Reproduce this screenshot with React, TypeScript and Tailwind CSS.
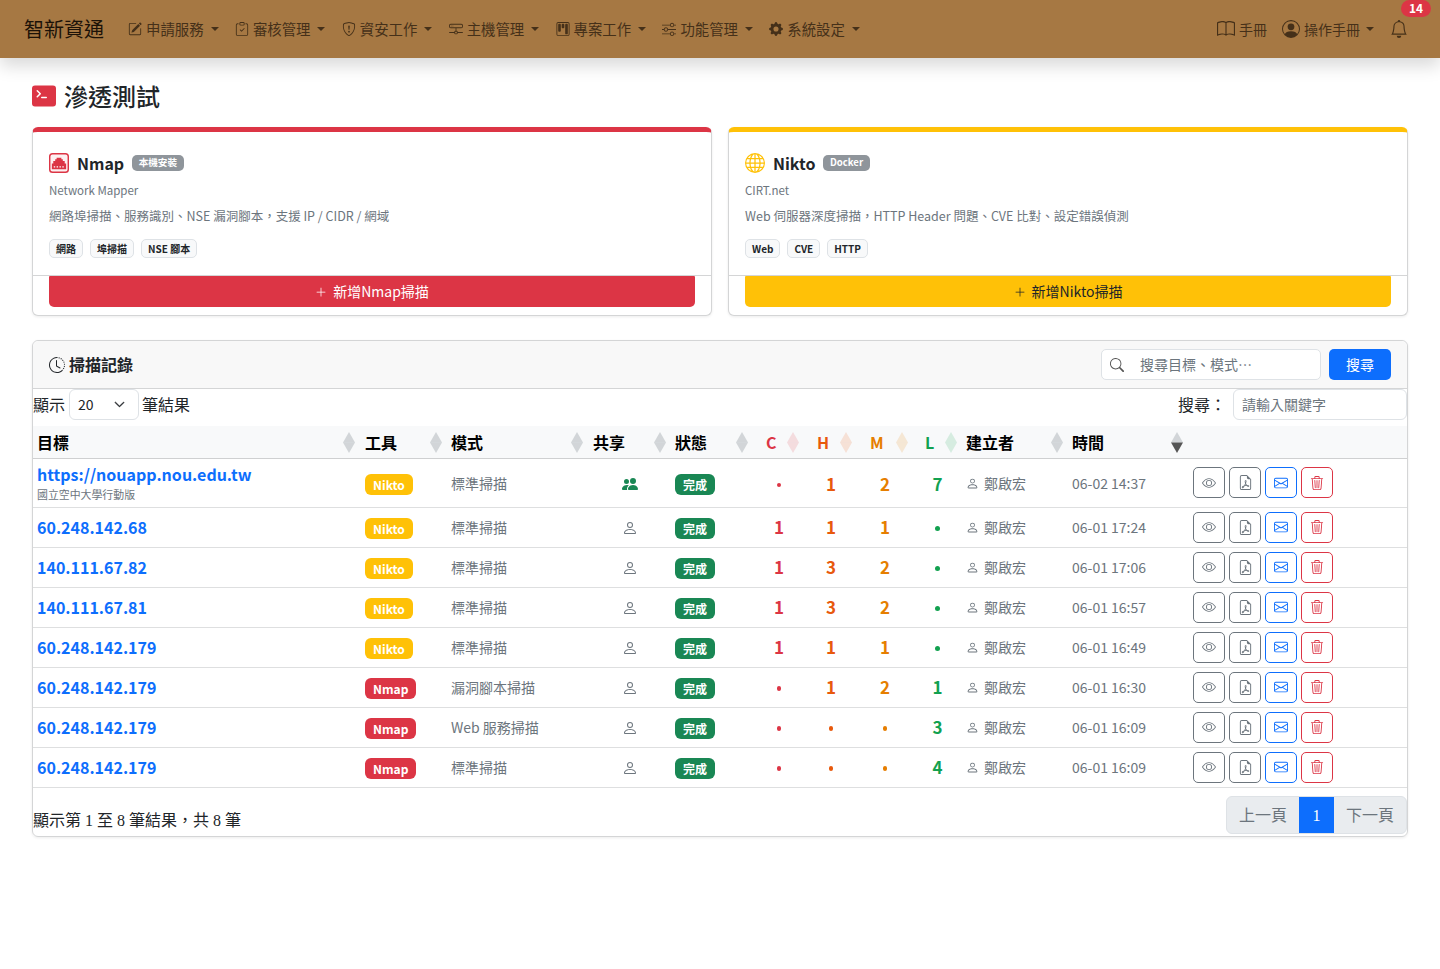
import {
  BsPencilSquare,
  BsClipboardCheck,
  BsShieldExclamation,
  BsHddNetwork,
  BsKanban,
  BsSliders,
  BsGearFill,
  BsBook,
  BsPersonCircle,
  BsBell,
  BsTerminalFill,
  BsClockHistory,
  BsSearch,
  BsPeopleFill,
  BsPerson,
  BsEye,
  BsFileEarmarkPdf,
  BsEnvelope,
  BsTrash3,
  BsPlusLg,
  BsGlobe,
  BsChevronDown,
} from "react-icons/bs";

const sans = "font-['Noto_Sans_CJK_TC','Noto_Sans',sans-serif]";

const navItems = [
  { label: "申請服務", icon: BsPencilSquare },
  { label: "審核管理", icon: BsClipboardCheck },
  { label: "資安工作", icon: BsShieldExclamation },
  { label: "主機管理", icon: BsHddNetwork },
  { label: "專案工作", icon: BsKanban },
  { label: "功能管理", icon: BsSliders },
  { label: "系統設定", icon: BsGearFill },
];

const rows = [
  { target: "https://nouapp.nou.edu.tw", sub: "國立空中大學行動版", tool: "Nikto", mode: "標準掃描", shared: true, c: "", h: "1", m: "2", l: "7", time: "06-02 14:37" },
  { target: "60.248.142.68", tool: "Nikto", mode: "標準掃描", c: "1", h: "1", m: "1", l: "", time: "06-01 17:24" },
  { target: "140.111.67.82", tool: "Nikto", mode: "標準掃描", c: "1", h: "3", m: "2", l: "", time: "06-01 17:06" },
  { target: "140.111.67.81", tool: "Nikto", mode: "標準掃描", c: "1", h: "3", m: "2", l: "", time: "06-01 16:57" },
  { target: "60.248.142.179", tool: "Nikto", mode: "標準掃描", c: "1", h: "1", m: "1", l: "", time: "06-01 16:49" },
  { target: "60.248.142.179", tool: "Nmap", mode: "漏洞腳本掃描", c: "", h: "1", m: "2", l: "1", time: "06-01 16:30" },
  { target: "60.248.142.179", tool: "Nmap", mode: "Web 服務掃描", c: "", h: "", m: "", l: "3", time: "06-01 16:09" },
  { target: "60.248.142.179", tool: "Nmap", mode: "標準掃描", c: "", h: "", m: "", l: "4", time: "06-01 16:09" },
];

function Sort({ color = "#6c757d", active = false, tight = false }: { color?: string; active?: boolean; tight?: boolean }) {
  const faint = color === "#6c757d" ? 0.27 : 0.15;
  return (
    <svg width="12" height="21" viewBox="0 0 12 21" className={`absolute ${tight ? "right-[5px]" : "right-[6px]"} top-[6px]`}>
      <path d="M6 0L12 10.5H0Z" fill={color} opacity={faint} />
      <path d="M6 21L12 10.5H0Z" fill={active ? "#555" : color} opacity={active ? 1 : faint} />
    </svg>
  );
}

function Count({ value, className }: { value: string; className: string }) {
  return (
    <td className={`text-center text-[17px] font-bold ${className}`}>
      {value === "" ? <span className="inline-block w-[4.5px] h-[4.5px] rounded-full bg-current align-middle mb-[2px]" /> : value}
    </td>
  );
}

function NmapIcon() {
  return (
    <svg width="20" height="20" viewBox="0 0 21 21">
      <rect x="0.75" y="0.75" width="19.5" height="19.5" rx="3" fill="#fdf0f1" stroke="#dc3545" strokeWidth="1.5" />
      <path d="M3 17V11H4.5V8.5H6.5V6.5H8V5H13V6.5H14.5V8.5H16.5V11H18V17Z" fill="#dc3545" />
      <path d="M5 14.5H6.5M8 14.5H9.5M11 14.5H12.5M14 14.5H15.5" stroke="#fff" strokeWidth="1.3" />
    </svg>
  );
}

function ToolCard({
  color,
  text,
  icon,
  name,
  badge,
  vendor,
  desc,
  tags,
  action,
}: {
  color: string;
  text: string;
  icon: React.ReactNode;
  name: string;
  badge: string;
  vendor: string;
  desc: string;
  tags: string[];
  action: string;
}) {
  return (
    <div className={`flex-1 h-[189px] rounded-md border border-[#d4d5d6] border-t-[5px] ${color} flex flex-col bg-white shadow-[0_1px_3px_rgba(0,0,0,0.08)]`}>
      <div className="h-[144px] px-4 pt-[18px] border-b border-[#d4d5d6]">
        <div className="flex items-center h-[26px]">
          {icon}
          <span className="ml-2 text-[16px] font-bold text-[#212529]">{name}</span>
          <span className="ml-2 px-[6.5px] h-[16px] leading-[15px] rounded-[5px] bg-[#8f959b] text-white text-[9.6px] font-bold">{badge}</span>
        </div>
        <div className="mt-[5px] text-[11.5px] leading-[18px] text-[#6c757d]">{vendor}</div>
        <div className="mt-[7px] text-[12.5px] leading-[20px] text-[#6c757d]">{desc}</div>
        <div className="mt-[13px] flex gap-[7px]">
          {tags.map((t) => (
            <span key={t} className="px-[6px] h-[19px] leading-[17px] rounded-[5px] border border-[#dee2e6] bg-[#f8f9fa] text-[10px] font-bold text-[#212529]">{t}</span>
          ))}
        </div>
      </div>
      <div className="px-4">
        <button className={`w-full h-[31px] rounded-b-[5px] rounded-t-[1px] ${text} text-[14px] flex items-center justify-center gap-[6px]`}>
          <BsPlusLg className="text-[12px]" />
          {action}
        </button>
      </div>
    </div>
  );
}

export default function App() {
  return (
    <div className={`${sans} min-h-[969px] bg-white text-[#212529]`}>
      <nav className="relative h-[58px] bg-[#a67843] flex items-center pl-6 pr-[32px] shadow-[0_8px_16px_rgba(0,0,0,0.15)]">
        <span className="text-[20px] text-[#1c1208] mr-[24px]">智新資通</span>
        <div className="flex items-center gap-[16.3px] text-[14.4px] text-[#453019]">
          {navItems.map((n) => (
            <span key={n.label} className="flex items-center">
              <n.icon className="text-[14px] mr-1" />
              {n.label}
              <span className="ml-[7px] w-0 h-0 border-x-[4px] border-x-transparent border-t-[4.5px] border-t-[#453019]" />
            </span>
          ))}
        </div>
        <div className="ml-auto flex items-center text-[14px] text-[#453019]">
          <BsBook className="text-[18px] mr-1" />
          手冊
          <BsPersonCircle className="text-[18px] ml-[15px] mr-1" />
          操作手冊
          <span className="ml-[6px] w-0 h-0 border-x-[4px] border-x-transparent border-t-[4.5px] border-t-[#453019]" />
          <span className="relative ml-[16px]">
            <BsBell className="text-[18px]" />
            <span className="absolute left-[11px] -top-[20px] h-[17px] w-[30px] rounded-full bg-[#dc3545] text-white text-[12px] font-bold text-center leading-[16px]">14</span>
          </span>
        </div>
      </nav>

      <main className="px-8">
        <div className="flex items-center h-[69px] pt-[6px]">
          <BsTerminalFill className="text-[24px] text-[#dc3545]" />
          <h1 className="ml-2 text-[24px] font-medium">滲透測試</h1>
        </div>

        <div className="flex gap-4">
          <ToolCard
            color="border-t-[#dc3545]"
            text="bg-[#dc3545] text-white"
            icon={<NmapIcon />}
            name="Nmap"
            badge="本機安裝"
            vendor="Network Mapper"
            desc="網路埠掃描、服務識別、NSE 漏洞腳本，支援 IP / CIDR / 網域"
            tags={["網路", "埠掃描", "NSE 腳本"]}
            action="新增Nmap掃描"
          />
          <ToolCard
            color="border-t-[#ffc107]"
            text="bg-[#ffc107] text-[#212529]"
            icon={<BsGlobe className="text-[20px] text-[#ffc107]" />}
            name="Nikto"
            badge="Docker"
            vendor="CIRT.net"
            desc="Web 伺服器深度掃描，HTTP Header 問題、CVE 比對、設定錯誤偵測"
            tags={["Web", "CVE", "HTTP"]}
            action="新增Nikto掃描"
          />
        </div>

        <section className="mt-6 h-[497px] rounded-md border border-[#d4d5d6] shadow-[0_1px_3px_rgba(0,0,0,0.08)] flex flex-col">
          <header className="h-[48px] shrink-0 bg-[#f8f8f8] border-b border-[#d4d5d6] rounded-t-md flex items-center pl-4 pr-4">
            <BsClockHistory className="text-[16px] mr-1" />
            <span className="text-[16px] font-bold pb-[2px]">掃描記錄</span>
            <div className="ml-auto flex items-center gap-2">
              <div className="w-[220px] h-[31px] rounded-[5px] border border-[#dee2e6] bg-white flex items-center px-2 text-[14px] text-[#6c757d]">
                <BsSearch className="text-[14px] text-[#555] mr-[16px]" />
                搜尋目標、模式…
              </div>
              <button className="w-[62px] h-[31px] rounded-[5px] bg-[#0d6efd] text-white text-[14px]">搜尋</button>
            </div>
          </header>

          <div className="h-[37px] shrink-0 flex items-start text-[16px] leading-[31px]">
            <span>顯示</span>
            <span className="ml-[4px] w-[70px] h-[31px] rounded-md border border-[#dee2e6] flex items-center justify-between pl-2 pr-[13px] pb-[1px] text-[14px]">
              20
              <BsChevronDown className="text-[11px] stroke-1" />
            </span>
            <span className="ml-[3px]">筆結果</span>
            <span className="ml-auto mr-[7px]">搜尋：</span>
            <span className="w-[174px] h-[31px] rounded-md border border-[#dee2e6] flex items-center pl-2 text-[14px] text-[#6c757d]">請輸入關鍵字</span>
          </div>

          <table className="table-fixed w-full border-collapse">
            <colgroup>
              <col className="w-[328px]" />
              <col className="w-[86px]" />
              <col className="w-[142px]" />
              <col className="w-[82px]" />
              <col className="w-[82px]" />
              <col className="w-[52px]" />
              <col className="w-[52px]" />
              <col className="w-[56px]" />
              <col className="w-[49px]" />
              <col className="w-[106px]" />
              <col className="w-[121px]" />
              <col />
            </colgroup>
            <thead>
              <tr className="h-[32px] bg-[#f8f9fa] border-b border-[#cfd0d1] text-left text-[16px] font-bold text-black">
                <th className="relative px-1"><span>目標</span><Sort /></th>
                <th className="relative px-1"><span>工具</span><Sort tight /></th>
                <th className="relative px-1"><span>模式</span><Sort /></th>
                <th className="relative px-1"><span>共享</span><Sort tight /></th>
                <th className="relative px-1"><span>狀態</span><Sort tight /></th>
                <th className="relative pl-[13px] text-[#dc3545]"><span>C</span><Sort color="#dc3545" /></th>
                <th className="relative pl-[12px] text-[#e8590c]"><span>H</span><Sort color="#e8590c" tight /></th>
                <th className="relative pl-[13px] text-[#e67e00]"><span>M</span><Sort color="#e67e00" tight /></th>
                <th className="relative pl-[12px] text-[#12a150]"><span>L</span><Sort color="#12a150" tight /></th>
                <th className="relative px-1"><span>建立者</span><Sort tight /></th>
                <th className="relative px-1"><span>時間</span><Sort active /></th>
                <th />
              </tr>
            </thead>
            <tbody className="text-[14px] text-[#6c757d]">
              {rows.map((r, i) => (
                <tr key={i} className={`${i === 0 ? "h-[49px] [&>td]:pt-[2px] [&>td:last-child]:pt-0" : "h-[40px]"} border-b border-[#dedfe0]`}>
                  <td className="px-1 text-[16px] font-bold text-[#0d6efd]">
                    <div className="leading-[21px]">{r.target}</div>
                    {r.sub && <div className="text-[10.9px] leading-[18px] font-normal text-[#6c757d]">{r.sub}</div>}
                  </td>
                  <td className="px-1">
                    <span className={`inline-block mt-[2px] h-[21px] rounded-[6px] px-2 text-[12px] font-bold leading-[21px] text-white ${r.tool === "Nikto" ? "bg-[#ffc107]" : "bg-[#dc3545]"}`}>{r.tool}</span>
                  </td>
                  <td className="px-1">{r.mode}</td>
                  <td className="pl-[33px]">
                    {r.shared ? <BsPeopleFill className="text-[16px] text-[#198754]" /> : <BsPerson className="text-[16px] mt-[1px]" />}
                  </td>
                  <td className="px-1">
                    <span className="inline-block mt-[2px] h-[21px] rounded-[6px] bg-[#198754] px-2 text-[12px] font-bold leading-[21px] text-white">完成</span>
                  </td>
                  <Count value={r.c} className="text-[#dc3545]" />
                  <Count value={r.h} className="text-[#e8590c]" />
                  <Count value={r.m} className="text-[#e67e00]" />
                  <Count value={r.l} className="text-[#12a150]" />
                  <td className="px-1">
                    <span className="flex items-center gap-[5px]"><BsPerson className="text-[13px]" />鄭啟宏</span>
                  </td>
                  <td className="px-1">{r.time}</td>
                  <td className="px-1">
                    <div className="flex gap-1">
                      <span className="w-8 h-[31px] rounded-[5px] border border-[#6c757d] flex items-center justify-center"><BsEye className="text-[14px]" /></span>
                      <span className="w-8 h-[31px] rounded-[5px] border border-[#6c757d] flex items-center justify-center"><BsFileEarmarkPdf className="text-[15px]" /></span>
                      <span className="w-8 h-[31px] rounded-[5px] border border-[#0d6efd] text-[#0d6efd] flex items-center justify-center"><BsEnvelope className="text-[14px]" /></span>
                      <span className="w-8 h-[31px] rounded-[5px] border border-[#dc3545] text-[#dc3545] flex items-center justify-center"><BsTrash3 className="text-[14px]" /></span>
                    </div>
                  </td>
                </tr>
              ))}
            </tbody>
          </table>

          <div className="flex-1 flex items-start justify-between font-['Liberation_Serif','Noto_Sans_CJK_TC',serif]">
            <span className="mt-[21px] text-[16px]">顯示第 1 至 8 筆結果，共 8 筆</span>
            <div className="mt-2 flex h-[38px] text-[16px] text-[#6c757d] bg-[#e9ecef] border border-[#dee2e6] rounded-md">
              <span className="w-[72px] pt-[2px] flex items-center justify-center">上一頁</span>
              <span className="w-[35px] pt-[2px] flex items-center justify-center bg-[#0d6efd] text-white">1</span>
              <span className="w-[72px] pt-[2px] flex items-center justify-center">下一頁</span>
            </div>
          </div>
        </section>
      </main>
    </div>
  );
}
